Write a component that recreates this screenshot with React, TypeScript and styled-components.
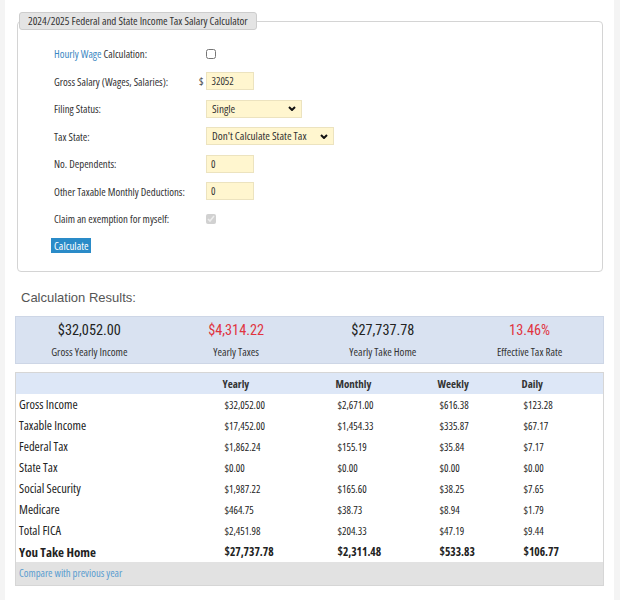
import React from 'react';
import styled, {createGlobalStyle} from 'styled-components';

const FONT = `"Open Sans", "Liberation Sans", Arial, sans-serif`;
const HEAD_FONT = `"Liberation Sans", Arial, sans-serif`;
const VALUE_FONT = `"Roboto Condensed", Roboto, "Liberation Sans", sans-serif`;

const TITLE_TEXT = '2024/2025 Federal and State Income Tax Salary Calculator';
const RESULTS_TEXT = 'Calculation Results:';
const COMPARE_TEXT = 'Compare with previous year';

const SUMMARY = [
  {value: '$32,052.00', label: 'Gross Yearly Income', red: false},
  {value: '$4,314.22', label: 'Yearly Taxes', red: true},
  {value: '$27,737.78', label: 'Yearly Take Home', red: false},
  {value: '13.46%', label: 'Effective Tax Rate', red: true},
];

const ROWS = [
  ['Gross Income', '$32,052.00', '$2,671.00', '$616.38', '$123.28'],
  ['Taxable Income', '$17,452.00', '$1,454.33', '$335.87', '$67.17'],
  ['Federal Tax', '$1,862.24', '$155.19', '$35.84', '$7.17'],
  ['State Tax', '$0.00', '$0.00', '$0.00', '$0.00'],
  ['Social Security', '$1,987.22', '$165.60', '$38.25', '$7.65'],
  ['Medicare', '$464.75', '$38.73', '$8.94', '$1.79'],
  ['Total FICA', '$2,451.98', '$204.33', '$47.19', '$9.44'],
];

const TOTAL_ROW = ['You Take Home', '$27,737.78', '$2,311.48', '$533.83', '$106.77'];

const GlobalStyle = createGlobalStyle`
  body {
    margin: 0;
    background: #f4f4f4;
    font-family: ${FONT};
    font-stretch: condensed;
    color: #333;
  }
`;

const Page = styled.div`
  width: 589px;
  min-height: 573px;
  margin-left: 5px;
  padding: 12px 10px 15px 10px;
  background: #FFFFFF;
`;

const Fieldset = styled.fieldset`
  margin: 0 1px 0 2px;
  padding: 0 0 16px 0;
  border: 1px solid #d4d4d4;
  border-radius: 4px;
`;

const Legend = styled.legend`
  margin-left: 1px;
  padding: 0 8px;
  height: 16px;
  line-height: 16px;
  background: #e4e4e4;
  border: 1px solid #cdcdcd;
  border-radius: 3px;
  font-size: 11px;
  color: #333;
`;

const Form = styled.div`
  display: grid;
  grid-template-columns: 152px auto;
  grid-auto-rows: 27.5px;
  align-items: center;
  padding: 10px 0 0 36px;
`;

const Label = styled.div`
  padding-top: 1px;
  font-size: 10.8px;
  line-height: 14px;
  color: #333;
`;

const Link = styled.span`
  color: #3b88c3;
`;

const Control = styled.div`
  display: flex;
  align-items: center;
`;

const Currency = styled.span`
  margin-left: -7px;
  margin-right: 3px;
  font-size: 10.5px;
  color: #333;
`;

const Check = styled.input`
  width: 10px;
  height: 10px;
  margin: 0;
  accent-color: #c8c8c8;
`;

const TextInput = styled.input`
  box-sizing: border-box;
  width: 48px;
  height: 18px;
  padding: 0 0 0 4px;
  background: #fff6cf;
  border: 1px solid #ece3bf;
  font-family: ${FONT};
  font-stretch: condensed;
  font-size: 10.5px;
  line-height: 16px;
  color: #333;
  outline: none;
`;

const SelectBox = styled.div<{$width: number}>`
  box-sizing: border-box;
  display: flex;
  align-items: center;
  justify-content: space-between;
  width: ${p => p.$width}px;
  height: 18px;
  padding: 0 5px 0 5px;
  background: #fff6cf;
  border: 1px solid #ece3bf;
  font-size: 11.2px;
  line-height: 14px;
  color: #333;
  cursor: default;
`;

const Button = styled.button`
  margin: 5px 0 0 33px;
  padding: 0 3px;
  height: 15px;
  background: #2a8bc8;
  border: none;
  color: #FFFFFF;
  font-family: ${FONT};
  font-stretch: condensed;
  font-size: 11px;
  line-height: 15px;
`;

const ResultsTitle = styled.h2`
  margin: 17px 0 9px 6px;
  font-family: ${HEAD_FONT};
  font-size: 13px;
  line-height: 18px;
  font-weight: normal;
  color: #555;
`;

const Summary = styled.div`
  display: grid;
  grid-template-columns: repeat(4, 1fr);
  padding: 5px 0;
  background: #d9e2f1;
  border: 1px solid #cdd6e6;
`;

const SummaryItem = styled.div`
  text-align: center;
`;

const SummaryValue = styled.div<{$red: boolean}>`
  font-family: ${VALUE_FONT};
  font-stretch: condensed;
  font-size: 14.3px;
  line-height: 16px;
  color: ${p => (p.$red ? '#e0343f' : '#222')};
`;

const SummaryLabel = styled.div`
  margin-top: 8px;
  font-size: 11px;
  line-height: 12px;
  color: #333;
`;

const Table = styled.table`
  width: 100%;
  margin-top: 8px;
  border-collapse: collapse;
  table-layout: fixed;
  border: 1px solid #d6d6d6;
`;

const HeadCell = styled.th`
  height: 20px;
  padding: 1px 0 0 1px;
  background: #dde7f7;
  text-align: left;
  font-size: 11px;
  font-weight: bold;
  color: #333;
`;

const NameCell = styled.td<{$bold?: boolean}>`
  height: 20px;
  padding: 1px 0 0 3px;
  font-size: ${p => (p.$bold ? 13 : 12.5)}px;
  line-height: 16px;
  font-weight: ${p => (p.$bold ? 'bold' : 'normal')};
  color: #222;
`;

const ValueCell = styled.td<{$bold?: boolean}>`
  height: 20px;
  padding: 1px 0 0 3px;
  font-size: ${p => (p.$bold ? 11.5 : 10.5)}px;
  line-height: 16px;
  font-weight: ${p => (p.$bold ? 'bold' : 'normal')};
  color: #222;
`;

const FootCell = styled.td`
  height: 23px;
  padding: 0 0 0 3px;
  background: #e2e2e2;
  font-size: 10.7px;
  color: #5a9dd0;
`;

const ChevronIcon = () => (
  <svg width="8" height="5" viewBox="0 0 8 5">
    <polyline points="1,1 4,4 7,1" fill="none" stroke="#111" strokeWidth="2" />
  </svg>
);

const Dropdown = ({value, width}: {value: string; width: number}) => (
  <SelectBox $width={width} role="combobox">
    <span>{value}</span>
    <ChevronIcon />
  </SelectBox>
);

const App = () => {
  return (
    <Page>
      <GlobalStyle />
      <Fieldset>
        <Legend>{TITLE_TEXT}</Legend>
        <Form>
          <Label><Link>Hourly Wage</Link> Calculation:</Label>
          <Control><Check type="checkbox" /></Control>

          <Label>Gross Salary (Wages, Salaries):</Label>
          <Control>
            <Currency>$</Currency>
            <TextInput defaultValue="32052" />
          </Control>

          <Label>Filing Status:</Label>
          <Control><Dropdown value="Single" width={96} /></Control>

          <Label>Tax State:</Label>
          <Control><Dropdown value="Don't Calculate State Tax" width={128} /></Control>

          <Label>No. Dependents:</Label>
          <Control><TextInput defaultValue="0" /></Control>

          <Label>Other Taxable Monthly Deductions:</Label>
          <Control><TextInput defaultValue="0" /></Control>

          <Label>Claim an exemption for myself:</Label>
          <Control><Check type="checkbox" defaultChecked disabled /></Control>
        </Form>
        <Button>Calculate</Button>
      </Fieldset>

      <ResultsTitle>{RESULTS_TEXT}</ResultsTitle>
      <Summary>
        {SUMMARY.map(item => (
          <SummaryItem key={item.label}>
            <SummaryValue $red={item.red}>{item.value}</SummaryValue>
            <SummaryLabel>{item.label}</SummaryLabel>
          </SummaryItem>
        ))}
      </Summary>

      <Table>
        <colgroup>
          <col style={{width: 206}} />
          <col style={{width: 113}} />
          <col style={{width: 102}} />
          <col style={{width: 84}} />
          <col />
        </colgroup>
        <thead>
          <tr>
            <HeadCell />
            <HeadCell>Yearly</HeadCell>
            <HeadCell>Monthly</HeadCell>
            <HeadCell>Weekly</HeadCell>
            <HeadCell>Daily</HeadCell>
          </tr>
        </thead>
        <tbody>
          {ROWS.map(row => (
            <tr key={row[0]}>
              <NameCell>{row[0]}</NameCell>
              {row.slice(1).map((v, i) => <ValueCell key={i}>{v}</ValueCell>)}
            </tr>
          ))}
          <tr>
            <NameCell $bold>{TOTAL_ROW[0]}</NameCell>
            {TOTAL_ROW.slice(1).map((v, i) => <ValueCell key={i} $bold>{v}</ValueCell>)}
          </tr>
          <tr>
            <FootCell colSpan={5}>{COMPARE_TEXT}</FootCell>
          </tr>
        </tbody>
      </Table>
    </Page>
  );
};

export default App;
